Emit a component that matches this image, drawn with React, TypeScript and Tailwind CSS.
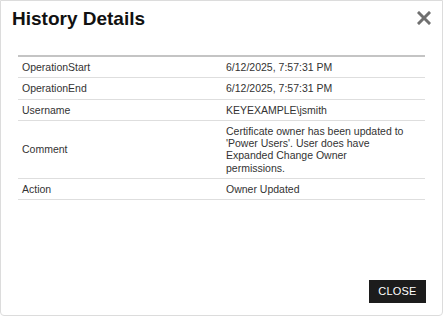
const rows = [
  { label: 'OperationStart', value: '6/12/2025, 7:57:31 PM' },
  { label: 'OperationEnd', value: '6/12/2025, 7:57:31 PM' },
  { label: 'Username', value: 'KEYEXAMPLE\\jsmith' },
  {
    label: 'Comment',
    value: "Certificate owner has been updated to 'Power Users'. User does have Expanded Change Owner permissions.",
  },
  { label: 'Action', value: 'Owner Updated' },
];

const App = () => {
  return (
    <div className="w-[443px] h-[316px] bg-white font-['Liberation_Sans',Arial,sans-serif] text-[#222]">
      <div className="flex flex-col h-full border border-[#dcdcdc] rounded-b-[4px]">
        {/* Header */}
        <div className="flex items-start justify-between h-[54px] pl-[11px] pr-[11px] pt-[6px]">
          <h2 className="text-[19px] font-bold text-[#111] leading-[24px]">History Details</h2>
          <button className="mt-[4px] text-[#707070]" aria-label="Close">
            <svg width="14" height="14" viewBox="0 0 14 14">
              <path d="M2 2 L12 12 M12 2 L2 12" stroke="currentColor" strokeWidth="3" strokeLinecap="square" />
            </svg>
          </button>
        </div>

        {/* Details table */}
        <div className="mx-[17px] border-t-2 border-[#c4c4c4]">
          <table className="w-full border-collapse text-[10.5px] leading-[12.3px] text-[#333]">
            <tbody>
              {rows.map((row) => (
                <tr key={row.label} className="border-b border-[#dedede]">
                  <td className="w-[204px] px-[4px] py-[4px] align-middle">{row.label}</td>
                  <td className="pl-[4px] pr-[21px] py-[4px] align-middle">{row.value}</td>
                </tr>
              ))}
            </tbody>
          </table>
        </div>

        <div className="flex-1" />

        {/* Footer */}
        <div className="flex justify-end pr-[16px] pb-[12px]">
          <button className="h-[23px] w-[57px] bg-[#1c1c1c] text-white text-[11px] tracking-[0.2px]">CLOSE</button>
        </div>
      </div>
    </div>
  );
};

export default App;
